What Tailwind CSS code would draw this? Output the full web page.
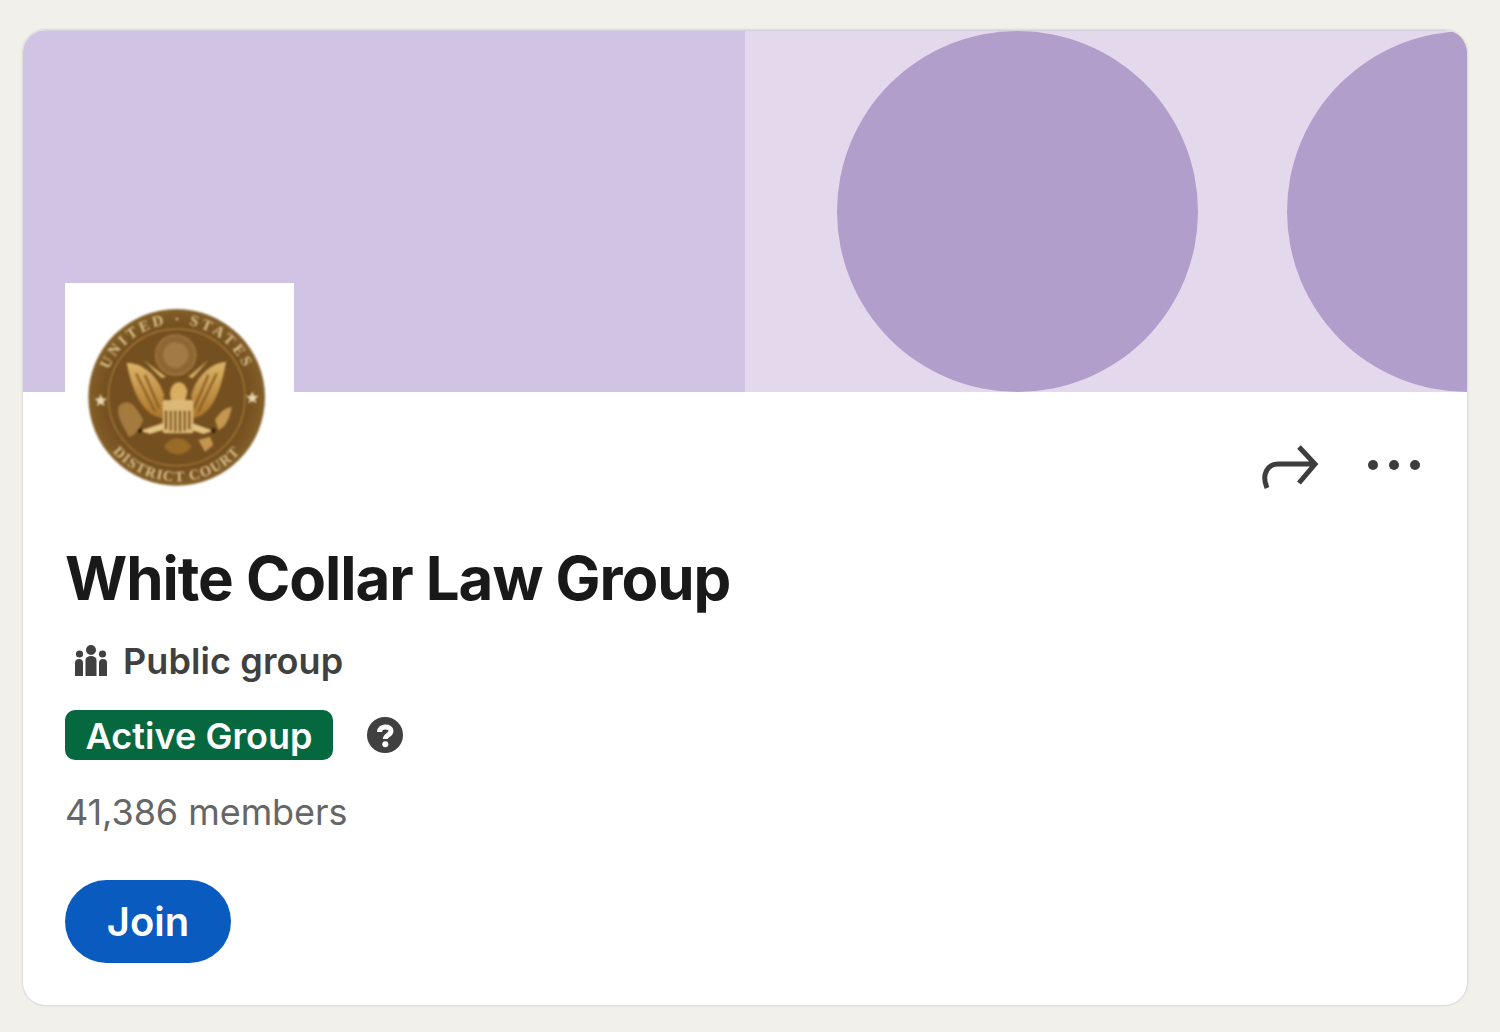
<!DOCTYPE html>
<html lang="en">
<head>
    <meta charset="UTF-8">
    <title>White Collar Law Group</title>
    <script src="https://cdn.jsdelivr.net/npm/@tailwindcss/browser@4"></script>
</head>
<body class="bg-[#f1f0eb] font-['Inter',sans-serif]">
    <div class="h-[1032px] pt-[29px] pl-[22px]">
        <!-- Card -->
        <div class="w-[1446px] h-[977px] bg-white rounded-[24px] border border-[#dfded9] shadow-[0_0_2px_#dcdbd6] overflow-hidden">
            <!-- Banner -->
            <div class="flex h-[362px] border-t border-t-[#d6d0dc]">
                <div class="w-[722px] bg-[#d1c3e4]"></div>
                <div class="flex-1 bg-[#e4d9ec] overflow-hidden flex items-center">
                    <div class="w-[361px] h-[361px] shrink-0 ml-[92px] rounded-full bg-[#b19ecb]"></div>
                    <div class="w-[361px] h-[361px] shrink-0 ml-[89px] rounded-full bg-[#b19ecb]"></div>
                </div>
            </div>

            <div class="pl-[42px] pr-[46px]">
                <!-- Logo + actions -->
                <div class="flex justify-between">
                    <div class="w-[229px] h-[229px] -mt-[109px] bg-white relative">
                        <svg viewBox="15 9 687 687" class="w-[229px] h-[229px] blur-[0.8px]">
                            <defs>
                                <radialGradient id="coin" cx="50%" cy="50%" r="52%">
                                    <stop offset="0%" stop-color="#75501f"/>
                                    <stop offset="75%" stop-color="#744f1f"/>
                                    <stop offset="92%" stop-color="#7f5b26"/>
                                    <stop offset="100%" stop-color="#8f6c30"/>
                                </radialGradient>
                                <linearGradient id="gold" x1="0" y1="0" x2="0" y2="1">
                                    <stop offset="0%" stop-color="#dcb468"/>
                                    <stop offset="100%" stop-color="#a9742a"/>
                                </linearGradient>
                                <path id="arcTop" d="M 130 352 A 220 220 0 0 1 570 352"/>
                                <path id="arcBottom" d="M 98 352 A 252 252 0 0 0 602 352"/>
                            </defs>
                            <circle cx="350" cy="352" r="265" fill="url(#coin)"/>
                            <circle cx="350" cy="352" r="205" fill="none" stroke="#a57a3a" stroke-width="4"/>
                            <text font-family="Liberation Serif, serif" font-weight="700" font-size="46" fill="#dcc08c" letter-spacing="9">
                                <textPath href="#arcTop" startOffset="50%" text-anchor="middle">UNITED  ·  STATES</textPath>
                            </text>
                            <text font-family="Liberation Serif, serif" font-weight="700" font-size="44" fill="#dcc08c" letter-spacing="4">
                                <textPath href="#arcBottom" startOffset="50%" text-anchor="middle">DISTRICT COURT</textPath>
                            </text>
                            <polygon points="122,342 127,355 141,356 130,365 134,378 122,371 110,378 114,365 103,356 117,355" fill="#e8d6ae"/>
                            <polygon points="577,334 582,347 596,348 585,357 589,370 577,363 565,370 569,357 558,348 572,347" fill="#e8d6ae"/>
                            <circle cx="347" cy="225" r="60" fill="#8d6634" stroke="#c09a5e" stroke-width="6" stroke-dasharray="3 5"/>
                            <circle cx="347" cy="225" r="38" fill="#a17a45"/>
                            <path d="M250 240 L318 290 L305 295 Z M445 240 L385 290 L398 295 Z" fill="#d5ad68"/>
                            <path d="M200 248 C250 248 295 290 312 345 L306 415 C250 405 218 340 200 248 Z" fill="url(#gold)"/>
                            <path d="M498 245 C450 250 408 290 394 345 L400 415 C452 405 482 340 498 245 Z" fill="url(#gold)"/>
                            <path d="M228 280 L285 395 M255 285 L298 385 M470 280 L415 395 M445 285 L402 385" stroke="#85591f" stroke-width="6" fill="none"/>
                            <path d="M330 345 C330 300 375 292 382 335 L375 365 L335 365 Z" fill="#d9ae62"/>
                            <path d="M240 452 L320 425 L325 445 L270 462 Z M460 452 L385 425 L380 445 L430 462 Z" fill="#e4c283"/>
                            <circle cx="240" cy="452" r="7" fill="#35220b"/>
                            <circle cx="460" cy="452" r="7" fill="#35220b"/>
                            <rect x="308" y="360" width="92" height="100" rx="6" fill="#dcb877"/>
                            <path d="M318 392 V448 M332 392 V452 M346 392 V455 M360 392 V455 M374 392 V452 M388 392 V448" stroke="#76511e" stroke-width="6"/>
                            <path d="M312 500 C330 465 375 465 395 500 C375 530 330 530 312 500 Z" fill="#9a6a27"/>
                            <path d="M175 380 C205 350 225 375 250 420 C240 445 225 470 205 470 C195 440 170 420 175 380 Z" fill="#a47a3f"/>
                            <path d="M465 420 C480 395 500 380 515 382 C510 415 495 445 475 450 Z" fill="#c49650"/>
                            <path d="M415 480 L450 470 L460 495 L435 515 Z" fill="#c49650"/>
                        </svg>
                    </div>
                    <div class="flex items-start gap-[47px] pt-[52px]">
                        <svg width="56" height="44" viewBox="0 0 56 44" fill="none" stroke="#3d3d3d" stroke-width="5" class="overflow-visible">
                            <path d="M35 3 L51 20 L35 39 M50 20 H14 C4 20 -3 30 3 44"/>
                        </svg>
                        <svg width="54" height="12" viewBox="0 0 54 12" fill="#3d3d3d" class="mt-[15px]">
                            <circle cx="6" cy="6" r="5"/>
                            <circle cx="27" cy="6" r="5"/>
                            <circle cx="48" cy="6" r="5"/>
                        </svg>
                    </div>
                </div>

                <!-- Group info -->
                <h1 class="mt-[30px] text-[60px] leading-[72px] font-bold tracking-[-1.05px] text-[#191919]">White Collar Law Group</h1>

                <div class="mt-[25px] flex items-center gap-[16px] pl-[10px]">
                    <svg width="32" height="32" viewBox="0 0 32 32" fill="#404040">
                        <circle cx="16" cy="5" r="5"/>
                        <circle cx="4.5" cy="9" r="3.6"/>
                        <circle cx="27.5" cy="9" r="3.6"/>
                        <path d="M10.5 15 a5.5 4 0 0 1 11 0 V31 H10.5 Z"/>
                        <path d="M0 18 a4 4 0 0 1 8 0 V31 H0 Z"/>
                        <path d="M24 18 a4 4 0 0 1 8 0 V31 H24 Z"/>
                    </svg>
                    <span class="text-[36px] leading-[44px] font-semibold text-[#404040] tracking-[0.1px]">Public group</span>
                </div>

                <div class="mt-[27px] flex items-center gap-[34px]">
                    <span class="w-[268px] h-[50px] rounded-[10px] bg-[#05683f] flex items-center justify-center pt-[1px] text-[36px] font-semibold text-white tracking-[0.05px]">Active Group</span>
                    <svg width="36" height="36" viewBox="0 0 36 36">
                        <circle cx="18" cy="18" r="18" fill="#404040"/>
                        <path d="M12.5 15 C12.5 8.5 24 8.5 24 14 C24 18 18.3 18 18.3 22" fill="none" stroke="#fff" stroke-width="5"/>
                        <circle cx="18.3" cy="27.3" r="3" fill="#fff"/>
                    </svg>
                </div>

                <p class="mt-[30px] text-[36px] leading-[44px] tracking-[-0.05px] text-[#666666]">41,386 members</p>

                <button class="mt-[46px] w-[166px] h-[83px] rounded-full bg-[#0a5bbf] text-white text-[40px] font-semibold">Join</button>
            </div>
        </div>
    </div>
</body>
</html>
